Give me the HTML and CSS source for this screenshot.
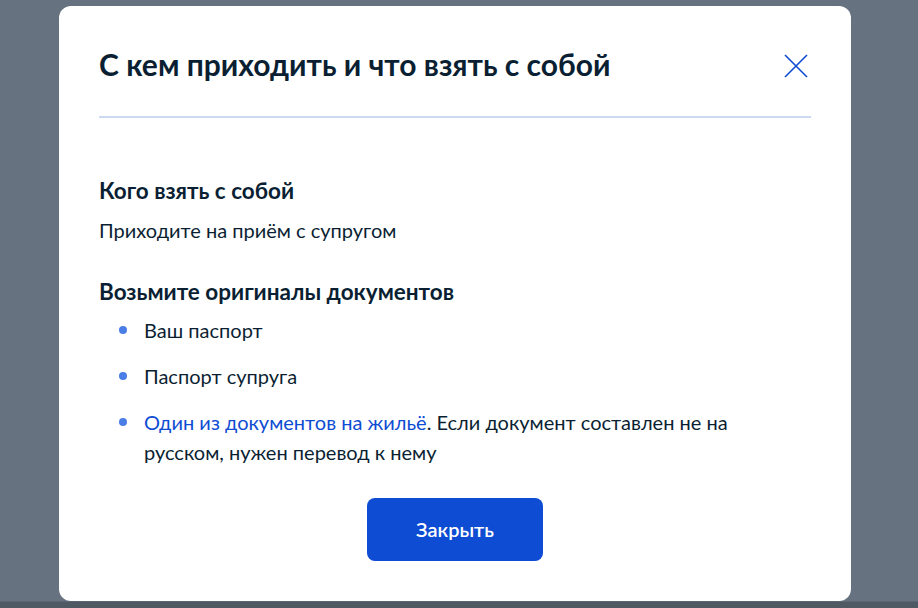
FILE: index.html
```html
<!DOCTYPE html>
<html lang="ru">
<head>
  <meta charset="UTF-8">
  <title>С кем приходить и что взять с собой</title>
  <link rel="stylesheet" href="styles.css">
</head>
<body>

<div class="modal">
  <div class="modal-head">
    <h2>С кем приходить и что взять с собой</h2>
    <button class="btn-close" aria-label="Закрыть">
      <svg width="24" height="24" viewBox="0 0 24 24">
        <path d="M1 1 L23 23 M23 1 L1 23" stroke="#0d4cd3" stroke-width="1.6" fill="none"/>
      </svg>
    </button>
  </div>

  <div class="modal-body">
    <h3>Кого взять с собой</h3>
    <p>Приходите на приём с супругом</p>

    <h3>Возьмите оригиналы документов</h3>
    <ul class="docs">
      <li>Ваш паспорт</li>
      <li>Паспорт супруга</li>
      <li><a href="#">Один из документов на жильё</a>. Если документ составлен не на русском, нужен перевод к нему</li>
    </ul>
  </div>

  <div class="modal-foot">
    <button class="btn-main">Закрыть</button>
  </div>
</div>

</body>
</html>
```

FILE: styles.css
```css
body {
  margin: 0;
  height: 608px;
  background: linear-gradient(to bottom, #66727f 601px, #4f5964 602px);
  font-family: Lato, "Noto Sans", Arial, sans-serif;
  color: #0b1f33;
  display: flex;
  align-items: flex-start;
  padding-left: 59px;
}
.modal {
  margin-top: 6px;
  width: 792px;
  box-sizing: border-box;
  background: white;
  border-radius: 12px;
  padding: 38px 40px 40px;
}
.modal-head {
  display: flex;
  justify-content: space-between;
  align-items: center;
  padding-bottom: 32px;
  border-bottom: 2px solid #cdd9f1;
}
.modal-head h2 {
  margin: 0;
  font-size: 30px;
  line-height: 40px;
  font-weight: bold;
}
.btn-close {
  border: none;
  background: none;
  padding: 0;
  margin-right: 3px;
  margin-top: 4px;
  width: 24px;
  height: 24px;
  cursor: pointer;
}
.modal-body {
  padding-top: 59px;
}
h3 {
  margin: 0 0 10px;
  font-size: 22.5px;
  line-height: 28px;
  font-weight: bold;
}
p {
  margin: 0 0 33px;
  font-size: 20px;
  line-height: 30px;
}
.docs {
  list-style: none;
  margin: -1px 0 0;
  padding: 0 0 0 45px;
}
.docs li {
  position: relative;
  font-size: 20px;
  line-height: 30px;
  margin-bottom: 16px;
}
.docs li:last-child {
  margin-bottom: 0;
}
.docs li::before {
  content: "";
  position: absolute;
  left: -25px;
  top: 11px;
  width: 8px;
  height: 8px;
  border-radius: 50%;
  background: #4a7ee6;
}
.docs a {
  color: #0d4cd3;
  text-decoration: none;
}
.modal-foot {
  display: flex;
  justify-content: center;
  padding-top: 31px;
}
.btn-main {
  width: 176px;
  height: 63px;
  padding: 0 0 2px;
  border: none;
  border-radius: 8px;
  background: #0d4cd3;
  color: white;
  font-family: Lato, "Noto Sans", Arial, sans-serif;
  font-size: 20px;
  font-weight: 600;
  cursor: pointer;
}
```
